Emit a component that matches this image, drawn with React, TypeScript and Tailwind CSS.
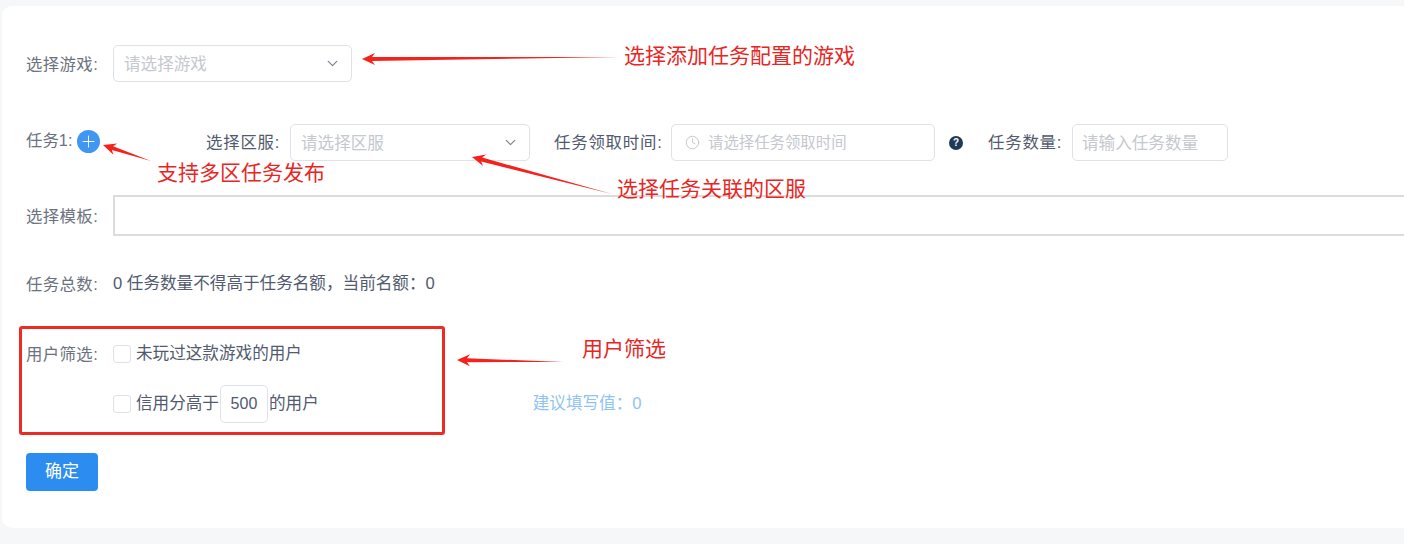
import { Clock, ChevronDown, Plus } from 'lucide-react'

const labelCls = 'w-[72px] shrink-0 whitespace-nowrap text-[16.4px] tracking-[0.4px] text-[#6b7280]'
const textCls = 'whitespace-nowrap text-[16.6px] text-[#515a6e]'
const formLabelCls = 'shrink-0 whitespace-nowrap text-[16.4px] tracking-[0.8px] text-[#515a6e]'

function Placeholder({ children }: { children: string }) {
  return <span className="mt-[4px] whitespace-nowrap text-[16.6px] text-[#c5c8ce]">{children}</span>
}

function SelectBox({ text, className }: { text: string; className: string }) {
  return (
    <div className={`flex items-center justify-between rounded-[5px] border border-[#dfe2e6] pl-[10px] pr-[10px] ${className}`}>
      <Placeholder>{text}</Placeholder>
      <ChevronDown size={17} strokeWidth={1.8} className="text-[#808695]" />
    </div>
  )
}

// 红色标注箭头: 尖端在 (x1,y1), 尾部渐细到 (x2,y2)
function Arrow({ x1, y1, x2, y2 }: { x1: number; y1: number; x2: number; y2: number }) {
  const len = Math.hypot(x2 - x1, y2 - y1)
  const ux = (x2 - x1) / len
  const uy = (y2 - y1) / len
  const px = -uy
  const py = ux
  const pt = (along: number, side: number) =>
    `${x1 + ux * along + px * side},${y1 + uy * along + py * side}`
  const points = [pt(0, 0), pt(13, -6), pt(10, -2), pt(len, 0), pt(10, 2), pt(13, 6)].join(' ')
  return <polygon points={points} fill="#f5221b" />
}

function Note({ className, children }: { className: string; children: string }) {
  return (
    <span className={`absolute whitespace-nowrap text-[21px] leading-none text-[#e8261f] ${className}`}>
      {children}
    </span>
  )
}

export default function App() {
  return (
    <div className="relative h-[547px] w-[1407px] overflow-hidden bg-white font-['Liberation_Sans','Noto_Sans_CJK_SC',sans-serif]">
      <div className="h-[544px] w-[1404px] bg-[#f5f7f9] pl-[2px] pt-[6px]">
        <div className="h-[522px] rounded-l-[10px] bg-white pl-[24px] pt-[39px]">
          {/* 选择游戏 */}
          <div className="flex h-[37px] items-center">
            <span className={`${labelCls} mr-[15px] mt-[1px]`}>选择游戏:</span>
            <SelectBox text="请选择游戏" className="h-[37px] w-[239px]" />
          </div>

          {/* 任务1 */}
          <div className="mt-[42px] flex h-[37px] items-center">
            <div className="flex w-[180px] shrink-0 items-center self-start pt-[4px]">
              <span className="mb-[3px] whitespace-nowrap text-[16.4px] text-[#6b7280]">任务1:</span>
              <span className="ml-[5px] flex h-[23px] w-[23px] items-center justify-center rounded-full bg-[#4096f3]">
                <Plus size={19} strokeWidth={1.2} className="text-white" />
              </span>
            </div>
            <span className={`${formLabelCls} w-[84px]`}>选择区服:</span>
            <SelectBox text="请选择区服" className="h-[37px] w-[240px]" />
            <span className={`${formLabelCls} ml-[24px] w-[117px]`}>任务领取时间:</span>
            <div className="flex h-[37px] w-[264px] items-center rounded-[5px] border border-[#dfe2e6] pl-[13px]">
              <Clock size={15} strokeWidth={1.6} className="text-[#c5c8ce]" />
              <span className="ml-[8px] whitespace-nowrap text-[15.4px] text-[#c5c8ce]">请选择任务领取时间</span>
            </div>
            <span className="ml-[14px] flex h-[14px] w-[14px] items-center justify-center rounded-full bg-[#1f3a57] text-[10px] font-bold text-white">?</span>
            <span className={`${formLabelCls} ml-[25px] w-[84px]`}>任务数量:</span>
            <div className="flex h-[37px] w-[156px] items-center rounded-[5px] border border-[#dfe2e6] pl-[9px]">
              <Placeholder>请输入任务数量</Placeholder>
            </div>
          </div>

          {/* 选择模板 */}
          <div className="mt-[34px] flex h-[41px] items-center">
            <span className={`${labelCls} mr-[15px] mt-[1px]`}>选择模板:</span>
            <div className="h-[41px] flex-1 border-y-2 border-l-2 border-y-[#dcdcdc] border-l-[#dcdcdc]" />
          </div>

          {/* 任务总数 */}
          <div className="mt-[37px] flex h-[23px] items-center">
            <span className={`${labelCls} mr-[15px]`}>任务总数:</span>
            <span className={textCls}>{'0 任务数量不得高于任务名额\uFF0C当前名额\uFF1A0'}</span>
          </div>

          {/* 用户筛选 */}
          <div className="mt-[48px] flex h-[20px] items-center">
            <span className={`${labelCls} mr-[15px]`}>用户筛选:</span>
            <span className="mb-[1px] h-[18px] w-[18px] rounded-[3px] border border-[#dfe2e6]" />
            <span className={`${textCls} ml-[5px]`}>未玩过这款游戏的用户</span>
          </div>
          <div className="mt-[30px] flex h-[20px] items-center pl-[87px]">
            <span className="h-[18px] w-[18px] rounded-[3px] border border-[#dfe2e6]" />
            <span className={`${textCls} ml-[5px]`}>信用分高于</span>
            <span className="mx-[1px] flex h-[38px] w-[48px] shrink-0 items-center justify-center rounded-[5px] border border-[#dfe2e6] text-[16px] text-[#515a6e]">500</span>
            <span className={textCls}>的用户</span>
            <span className="ml-[214px] mt-[1px] whitespace-nowrap text-[16.6px] text-[#8fc3f2]">{'建议填写值\uFF1A0'}</span>
          </div>

          <button className="mt-[39px] block h-[38px] w-[72px] rounded-[4px] bg-[#2d8cf0] text-[17px] text-white">确定</button>
        </div>
      </div>

      {/* 红色标注 */}
      <div className="absolute left-[19px] top-[326px] h-[109px] w-[426px] rounded-[3px] border-[3px] border-[#ee2a24]" />
      <svg className="absolute left-0 top-0" width={1407} height={547}>
        <Arrow x1={362} y1={59} x2={620} y2={57} />
        <Arrow x1={103} y1={145} x2={151} y2={161} />
        <Arrow x1={472} y1={157} x2={612} y2={194} />
        <Arrow x1={457} y1={360} x2={563} y2={362} />
      </svg>
      <Note className="left-[624px] top-[45px]">选择添加任务配置的游戏</Note>
      <Note className="left-[157px] top-[162px]">支持多区任务发布</Note>
      <Note className="left-[617px] top-[178px]">选择任务关联的区服</Note>
      <Note className="left-[582px] top-[338px]">用户筛选</Note>
    </div>
  )
}
